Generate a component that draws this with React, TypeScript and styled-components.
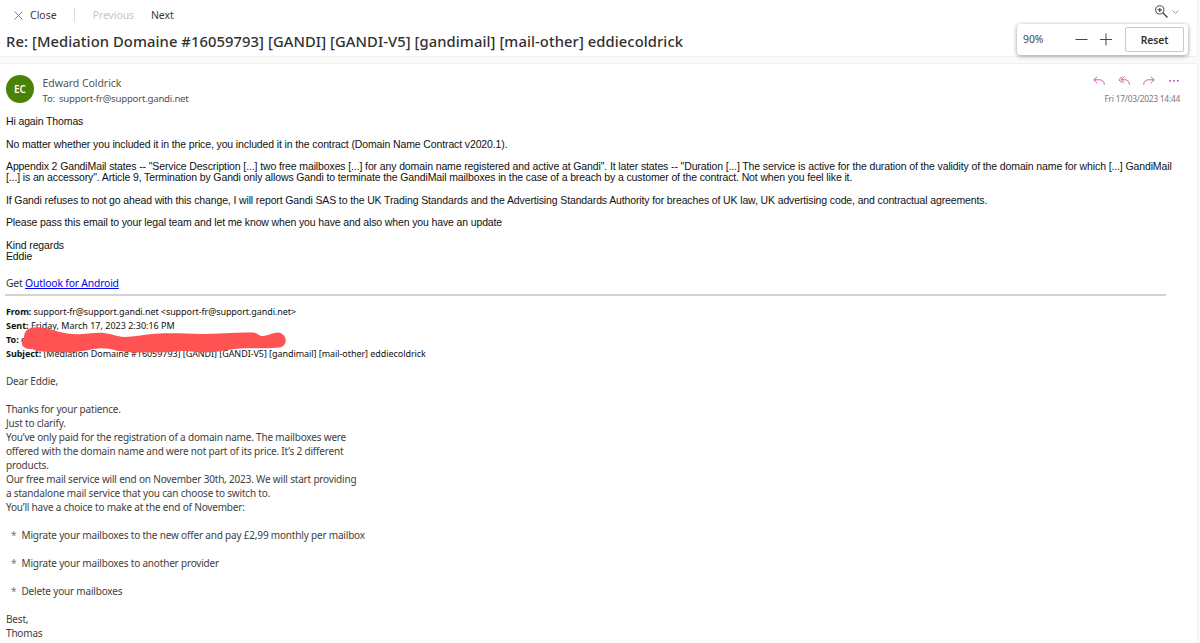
import { Fragment } from "react";
import styled, { createGlobalStyle } from "styled-components";

const uiFont = `"Noto Sans", "Open Sans", sans-serif`;
const arial = `"Liberation Sans", Arial, sans-serif`;

const GlobalStyle = createGlobalStyle`
  body {
    margin: 0;
    background-color: #fafafa;
    font-family: ${uiFont};
    overflow: hidden;
  }
`;

const Page = styled.div`
  display: flex;
  flex-direction: column;
  gap: 6px;
  width: 1198px;
  height: 643px;
`;

const TopPanel = styled.header`
  position: relative;
  height: 57px;
  box-sizing: border-box;
  background-color: #ffffff;
  border-bottom: 1px solid #f0f0f0;
  border-right: 1px solid #f3f3f3;
`;

const Toolbar = styled.div`
  display: flex;
  align-items: center;
  height: 30px;
  padding: 0 18px 0 14px;
`;

const ToolbarButton = styled.button<{
  $spacing?: number;
  $muted?: boolean;
}>`
  display: flex;
  align-items: center;
  gap: 7px;
  padding: 0;
  border: none;
  background: none;
  font-family: inherit;
  font-size: 10.5px;
  line-height: 16px;
  letter-spacing: ${(props) => props.$spacing || 0}px;
  color: ${(props) => (props.$muted ? "#c8c6c4" : "#3b3a39")};
`;

const Divider = styled.div`
  width: 1px;
  height: 14px;
  margin: 0 18px 0 17px;
  background-color: #dcdcdc;
`;

const ZoomToggle = styled.div`
  display: flex;
  align-items: center;
  gap: 3px;
  margin: -7px 0 0 auto;
`;

const NextWrapper = styled.div`
  margin-left: 17px;
`;

const Subject = styled.h1`
  margin: 1px 0 0 6px;
  font-size: 14.75px;
  font-weight: 500;
  line-height: 20px;
  letter-spacing: 0.08px;
  white-space: nowrap;
  color: #323130;
`;

const ZoomPopup = styled.div`
  position: absolute;
  top: 24px;
  left: 1017px;
  display: flex;
  align-items: center;
  width: 171px;
  height: 31px;
  padding: 0 4px 0 6px;
  box-sizing: border-box;
  border-radius: 4px;
  background-color: #ffffff;
  box-shadow: 0 1px 4px rgba(0, 0, 0, 0.42);
`;

const ZoomValue = styled.span`
  width: 52px;
  margin-top: -2px;
  font-size: 10.3px;
  color: #484644;
`;

const ResetButton = styled.button`
  width: 59px;
  height: 25px;
  margin-left: auto;
  padding: 0;
  border: 1px solid #c8c8c8;
  border-radius: 2px;
  background-color: #ffffff;
  font-family: inherit;
  font-size: 10.3px;
  font-weight: 600;
  letter-spacing: -0.1px;
  color: #323130;
`;

const MessagePanel = styled.main`
  flex: 1;
  box-sizing: border-box;
  background-color: #ffffff;
  border-top: 1px solid #f0f0f0;
  border-right: 1px solid #f0f0f0;
  overflow: hidden;
`;

const MessageHeader = styled.div`
  display: flex;
  height: 52.1px;
  padding: 0 17px 0 6px;
`;

const Avatar = styled.div`
  width: 28px;
  height: 28px;
  margin: 10.5px 8.5px 0 0;
  border-radius: 50%;
  background-color: #498205;
  color: #ffffff;
  font-size: 10px;
  font-weight: 600;
  line-height: 29px;
  text-align: center;
`;

const Sender = styled.div`
  padding-top: 11px;
`;

const SenderName = styled.div`
  font-size: 10.5px;
  line-height: 16px;
  letter-spacing: -0.05px;
  color: #555351;
`;

const Recipient = styled.div`
  display: flex;
  gap: 4px;
  font-size: 9.7px;
  line-height: 15px;
  letter-spacing: -0.26px;
  color: #555351;
`;

const HeaderSide = styled.div`
  display: flex;
  flex-direction: column;
  align-items: flex-end;
  margin-left: auto;
  padding-top: 12px;
`;

const Actions = styled.div`
  display: flex;
  gap: 13px;
  margin-bottom: 6px;
`;

const DateText = styled.div`
  font-size: 8.4px;
  line-height: 14px;
  letter-spacing: -0.24px;
  white-space: nowrap;
  color: #7a7876;
`;

const Reply = styled.section`
  padding: 0 6px;
  font-family: ${arial};
  font-size: 10.5px;
  line-height: 11.25px;
  color: #111111;
`;

const Line = styled.div<{ $spacing?: number }>`
  min-height: 1lh;
  letter-spacing: ${(props) =>
    props.$spacing === undefined ? "inherit" : `${props.$spacing}px`};
  white-space: pre;
`;

const Signature = styled.div`
  margin: 12.65px 0 0 6px;
  font-size: 10.4px;
  line-height: 16px;
  letter-spacing: -0.2px;
  color: #323130;
`;

const Link = styled.a`
  color: #0000ee;
  text-decoration: underline;
`;

const Rule = styled.hr`
  width: 1161px;
  height: 2px;
  margin: 3px 0 9px 5px;
  border: none;
  background-color: #d2d2d2;
`;

const Quoted = styled.section<{
  $color: string;
  $size: number;
  $spacing: number;
}>`
  position: relative;
  padding-left: 6px;
  font-size: ${(props) => props.$size}px;
  line-height: 14px;
  letter-spacing: ${(props) => props.$spacing}px;
  color: ${(props) => props.$color};
`;

const Redaction = styled.svg`
  position: absolute;
  top: 22px;
  left: 20px;
`;

const Bullet = styled.span`
  display: inline-block;
  width: 15.5px;
  padding-left: 5px;
  box-sizing: border-box;
  color: #777777;
`;

const Spacer = styled.div`
  height: 13px;
`;

const replyLines: [string, number][] = [
  ["Hi again Thomas", -0.13],
  ["", 0],
  [
    "No matter whether you included it in the price, you included it in the contract (Domain Name Contract v2020.1).",
    -0.125,
  ],
  ["", 0],
  [
    'Appendix 2 GandiMail states -- "Service Description [...] two free mailboxes [...] for any domain name registered and active at Gandi". It later states -- "Duration [...] The service is active for the duration of the validity of the domain name for which [...] GandiMail',
    -0.12,
  ],
  [
    '[...] is an accessory". Article 9, Termination by Gandi only allows Gandi to terminate the GandiMail mailboxes in the case of a breach by a customer of the contract. Not when you feel like it.',
    -0.125,
  ],
  ["", 0],
  [
    "If Gandi refuses to not go ahead with this change, I will report Gandi SAS to the UK Trading Standards and the Advertising Standards Authority for breaches of UK law, UK advertising code, and contractual agreements.",
    -0.13,
  ],
  ["", 0],
  [
    "Please pass this email to your legal team and let me know when you have and also when you have an update",
    -0.13,
  ],
  ["", 0],
  ["Kind regards", -0.13],
  ["Eddie", -0.13],
];

const headerLines: [string, string, number][] = [
  ["From:", "support-fr@support.gandi.net <support-fr@support.gandi.net>", -0.08],
  ["Sent:", "Friday, March 17, 2023 2:30:16 PM", 0],
  ["To:", "e", 0],
  [
    "Subject:",
    "[Mediation Domaine #16059793] [GANDI] [GANDI-V5] [gandimail] [mail-other] eddiecoldrick",
    -0.06,
  ],
];

const quotedLines = [
  "Dear Eddie,",
  "",
  "Thanks for your patience.",
  "Just to clarify.",
  "You’ve only paid for the registration of a domain name. The mailboxes were",
  "offered with the domain name and were not part of its price. It’s 2 different",
  "products.",
  "Our free mail service will end on November 30th, 2023. We will start providing",
  "a standalone mail service that you can choose to switch to.",
  "You’ll have a choice to make at the end of November:",
  "",
];

const choices = [
  "Migrate your mailboxes to the new offer and pay £2,99 monthly per mailbox",
  "Migrate your mailboxes to another provider",
  "Delete your mailboxes",
];

const CloseIcon = () => (
  <svg width="9" height="9" viewBox="0 0 9 9" stroke="#605e5c" strokeWidth="0.8">
    <path d="M0.5 0.5l8 8M8.5 0.5l-8 8" />
  </svg>
);

const MagnifierIcon = () => (
  <svg width="14" height="14" viewBox="0 0 14 14" fill="none" stroke="#484644">
    <circle cx="4.8" cy="4.9" r="4.1" strokeWidth="1" />
    <path d="M2.8 4.9h4M4.8 2.9v4" strokeWidth="1.1" />
    <path d="M7.8 7.8l4.7 4.7" strokeWidth="1.3" />
  </svg>
);

const ChevronIcon = () => (
  <svg width="7" height="5" viewBox="0 0 7 5" fill="none" stroke="#8a8886">
    <path d="M0.6 1.6l2.9 2.8L6.4 1.6" strokeWidth="0.9" />
  </svg>
);

const ZoomIcons = () => (
  <svg width="40" height="13" viewBox="0 0 40 13" stroke="#484644">
    <path d="M0.5 6.5h12M25 6.5h12M31 0.5v12" strokeWidth="1" />
  </svg>
);

const ReplyIcon = ({ all, flip }: { all?: boolean; flip?: boolean }) => (
  <svg width="12" height="10" viewBox="0 0 12 10" fill="none" stroke="#d04fa5" strokeWidth="0.9">
    <g transform={flip ? "translate(12 0) scale(-1 1)" : undefined}>
      {all ? (
        <path d="M4.2 0.6L0.8 3.8l3.4 3.2M6.4 0.6L3 3.8 6.4 7M3 3.8h4c2.6 0 4.4 1.9 4.4 5" />
      ) : (
        <path d="M4.2 0.6L0.8 3.8l3.4 3.2M0.8 3.8h5.6c3 0 5 1.9 5 5" />
      )}
    </g>
  </svg>
);

const MoreIcon = () => (
  <svg width="12" height="10" viewBox="0 0 12 10" fill="#c239b3">
    <rect x="1.5" y="4" width="1.6" height="1.6" />
    <rect x="5.2" y="4" width="1.6" height="1.6" />
    <rect x="8.9" y="4" width="1.6" height="1.6" />
  </svg>
);

const App = () => {
  return (
    <>
      <GlobalStyle />
      <Page>
        <TopPanel>
          <Toolbar>
            <ToolbarButton>
              <CloseIcon />
              Close
            </ToolbarButton>
            <Divider />
            <ToolbarButton $muted $spacing={-0.1}>
              Previous
            </ToolbarButton>
            <NextWrapper>
              <ToolbarButton $spacing={-0.1}>Next</ToolbarButton>
            </NextWrapper>
            <ZoomToggle>
              <MagnifierIcon />
              <ChevronIcon />
            </ZoomToggle>
          </Toolbar>
          <Subject>
            Re: [Mediation Domaine #16059793] [GANDI] [GANDI-V5] [gandimail]
            [mail-other] eddiecoldrick
          </Subject>
          <ZoomPopup>
            <ZoomValue>90%</ZoomValue>
            <ZoomIcons />
            <ResetButton>Reset</ResetButton>
          </ZoomPopup>
        </TopPanel>
        <MessagePanel>
          <MessageHeader>
            <Avatar>EC</Avatar>
            <Sender>
              <SenderName>Edward Coldrick</SenderName>
              <Recipient>
                <span>To:</span>
                <span>support-fr@support.gandi.net</span>
              </Recipient>
            </Sender>
            <HeaderSide>
              <Actions>
                <ReplyIcon />
                <ReplyIcon all />
                <ReplyIcon flip />
                <MoreIcon />
              </Actions>
              <DateText>Fri 17/03/2023 14:44</DateText>
            </HeaderSide>
          </MessageHeader>
          <Reply>
            {replyLines.map(([text, spacing], i) => (
              <Line key={i} $spacing={spacing}>
                {text}
              </Line>
            ))}
          </Reply>
          <Signature>
            Get <Link>Outlook for Android</Link>
          </Signature>
          <Rule />
          <Quoted $color="#111111" $size={9} $spacing={0}>
            {headerLines.map(([label, value, spacing]) => (
              <Line key={label} $spacing={spacing}>
                <b>{label}</b> {value}
              </Line>
            ))}
            <Redaction width="268" height="28" viewBox="0 0 268 28">
              <path
                d="M6 4C9 0.5 15 0 20 0.5C28 1 32 3 40 5C48 7 55 7.5 62 7C70 6.5 77 5 84 6C92 7 97 9.5 104 10C114 10 126 7 140 6.5C155 6 170 7 182 7C200 7 216 5 233 5.5C238 6 239 9 243 9C249 8.5 254 5 259 5.5C268 8 268 19 259 20.5C242 22 228 20.5 215 22C205 23 196 25.5 186 25.5C174 25.5 170 23.5 160 24C148 26 132 25.5 112 25.5C98 25 90 20.5 78 21.5C66 23 58 25.8 45 25.5C34 25.5 27 24.5 20 24.5C15 24.5 14 21.5 11 22C5 22.5 0 18 2.5 14C5 11 3 8 6 4Z"
                fill="#ff5252"
              />
            </Redaction>
          </Quoted>
          <Spacer />
          <Quoted $color="#3f3e3d" $size={10} $spacing={-0.185}>
            {quotedLines.map((text, i) => (
              <Line key={i}>{text}</Line>
            ))}
            {choices.map((text) => (
              <Fragment key={text}>
                <Line>
                  <Bullet>*</Bullet>
                  {text}
                </Line>
                <Line />
              </Fragment>
            ))}
            <Line>Best,</Line>
            <Line>Thomas</Line>
          </Quoted>
        </MessagePanel>
      </Page>
    </>
  );
};

export default App;
